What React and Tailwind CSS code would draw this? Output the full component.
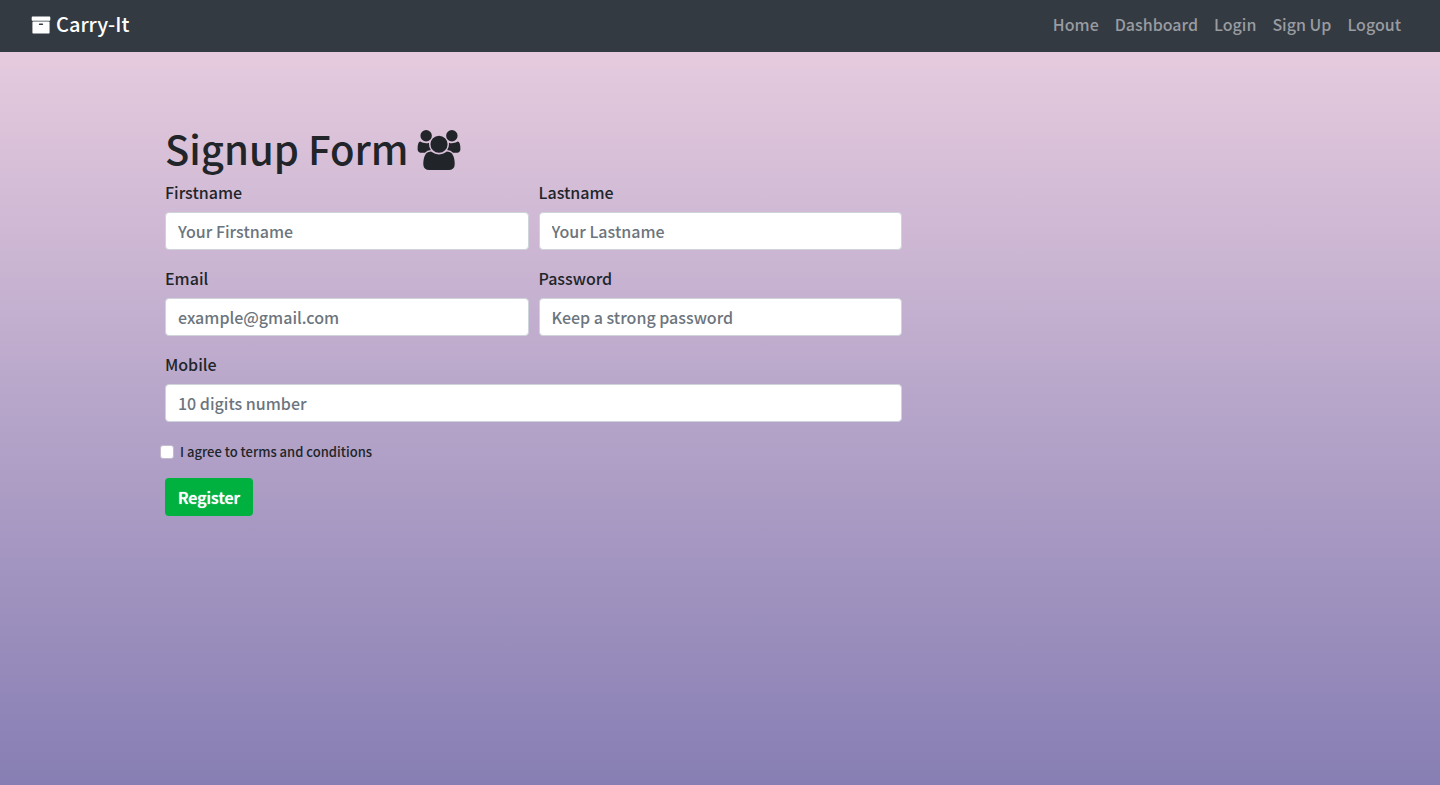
import React from "react";

const links = ["Home", "Dashboard", "Login", "Sign Up", "Logout"];

function ArchiveIcon() {
  return (
    <svg className="mt-[2px] h-5 w-5" viewBox="0 0 1792 1792" fill="currentColor" aria-hidden="true">
      <path d="M1088 832q0-26-19-45t-45-19h-256q-26 0-45 19t-19 45 19 45 45 19h256q26 0 45-19t19-45zm576-192v960q0 26-19 45t-45 19h-1408q-26 0-45-19t-19-45v-960q0-26 19-45t45-19h1408q26 0 45 19t19 45zm64-448v256q0 26-19 45t-45 19h-1536q-26 0-45-19t-19-45v-256q0-26 19-45t45-19h1536q26 0 45 19t19 45z" />
    </svg>
  );
}

function UsersIcon() {
  return (
    <svg className="mt-1 h-10 w-11" viewBox="0 0 1920 1792" fill="currentColor" aria-hidden="true">
      <path d="M593 896q-162 5-265 128h-134q-82 0-138-40.5t-56-118.5q0-353 124-353 6 0 43.5 21t97.5 42.5 119 21.5q67 0 133-23-5 37-5 66 0 139 81 256zm1071 637q0 120-73 189.5t-194 69.5h-874q-121 0-194-69.5t-73-189.5q0-53 3.5-103.5t14-109 26.5-108.5 43-97.5 62-81 85.5-53.5 111.5-20q10 0 43 21.5t73 48 107 48 135 21.5 135-21.5 107-48 73-48 43-21.5q61 0 111.5 20t85.5 53.5 62 81 43 97.5 26.5 108.5 14 109 3.5 103.5zm-1024-1277q0 106-75 181t-181 75-181-75-75-181 75-181 181-75 181 75 75 181zm704 384q0 159-112.5 271.5t-271.5 112.5-271.5-112.5-112.5-271.5 112.5-271.5 271.5-112.5 271.5 112.5 112.5 271.5zm576 225q0 78-56 118.5t-138 40.5h-134q-103-123-265-128 81-117 81-256 0-29-5-66 66 23 133 23 59 0 119-21.5t97.5-42.5 43.5-21q124 0 124 353zm-128-609q0 106-75 181t-181 75-181-75-75-181 75-181 181-75 181 75 75 181z" />
    </svg>
  );
}

function Field({ id, label, type = "text", placeholder, className = "" }) {
  return (
    <div className={className}>
      <label htmlFor={id} className="mb-2 block">
        {label}
      </label>
      <input
        id={id}
        type={type}
        placeholder={placeholder}
        className="block h-[38px] w-full rounded border border-[#ced4da] bg-white px-3 text-[#495057] placeholder:text-[#6c757d]"
      />
    </div>
  );
}

export default function App() {
  return (
    <div className="flex min-h-screen flex-col font-['Noto_Sans_CJK_JP',sans-serif] text-base/6 font-medium text-[#212529]">
      <nav className="flex h-[52px] items-center justify-between bg-[#343a42] pr-[39px] pb-1 pl-[31px]">
        <a href="#home" className="flex items-center gap-[5px] text-xl/[30px] text-white">
          <ArchiveIcon />
          Carry-It
        </a>
        <ul className="flex gap-4 text-[#999ca1]">
          {links.map((link) => (
            <li key={link}>
              <a href={"#" + link.toLowerCase().replace(" ", "-")}>{link}</a>
            </li>
          ))}
        </ul>
      </nav>
      <div className="flex-1 bg-linear-to-b from-[#e6cbde] to-[#877eb3]">
        <main className="mx-auto max-w-[1110px] pt-[72px]">
          <h1 className="mb-2 flex items-center gap-2 text-[40px]/[48px]">
            Signup Form
            <UsersIcon />
          </h1>
          <form className="max-w-[737px]">
            <div className="grid grid-cols-2 gap-x-[10px] gap-y-4">
              <Field id="firstname" label="Firstname" placeholder="Your Firstname" />
              <Field id="lastname" label="Lastname" placeholder="Your Lastname" />
              <Field id="email" label="Email" type="email" placeholder="example@gmail.com" />
              <Field id="password" label="Password" type="password" placeholder="Keep a strong password" />
              <Field id="mobile" label="Mobile" type="tel" placeholder="10 digits number" className="col-span-2" />
            </div>
            <div className="mt-[18px] -ml-[5px] flex items-center gap-[6px] text-[13px]/6">
              <input
                id="terms"
                type="checkbox"
                className="h-[14px] w-[14px] appearance-none rounded-[3px] border border-[#c4bccb] bg-white checked:bg-[#00b140]"
              />
              <label htmlFor="terms">I agree to terms and conditions</label>
            </div>
            <button
              type="submit"
              className="mt-[14px] h-[38px] rounded bg-[#00b140] px-[13px] text-white [text-shadow:0_0_1px_white]"
            >
              Register
            </button>
          </form>
        </main>
      </div>
    </div>
  );
}
